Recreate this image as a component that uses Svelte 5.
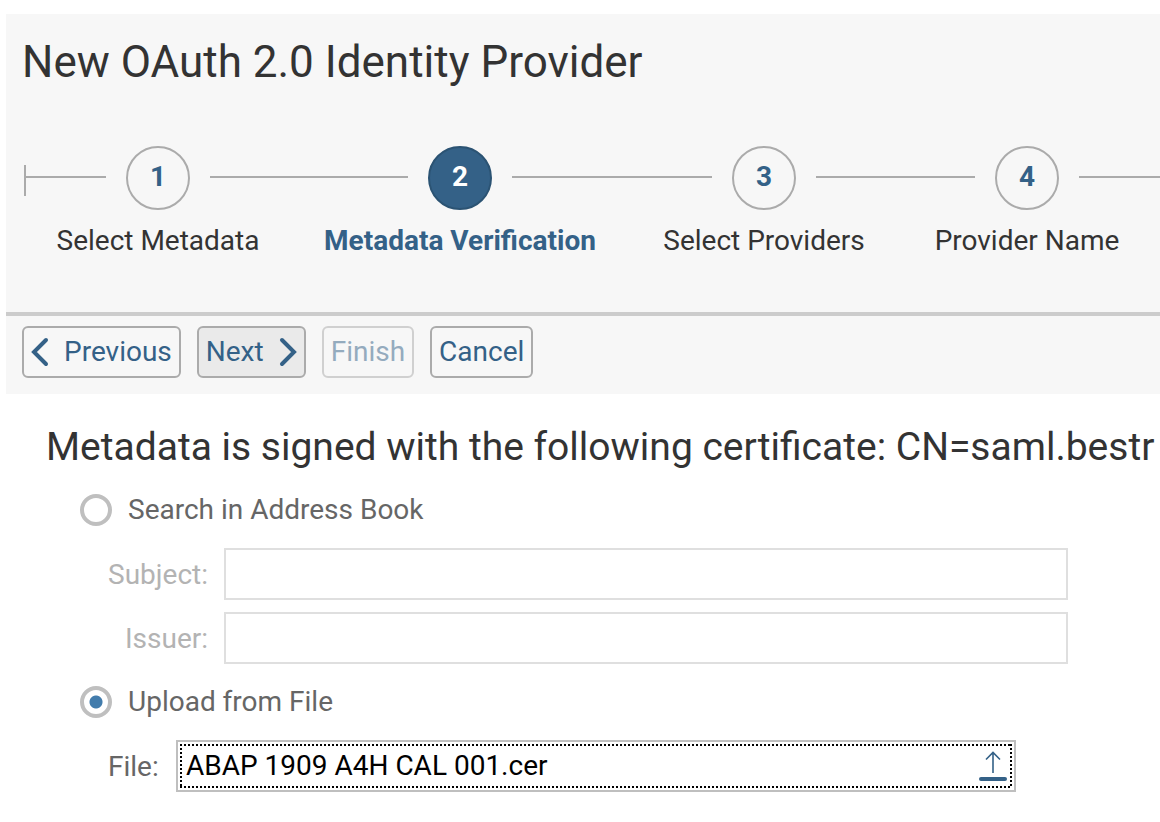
<script>
  const steps = [
    { number: 1, label: 'Select Metadata' },
    { number: 2, label: 'Metadata Verification', current: true },
    { number: 3, label: 'Select Providers' },
    { number: 4, label: 'Provider Name' }
  ];
  let source = $state('file');
  let fileName = $state('ABAP 1909 A4H CAL 001.cer');
</script>

<main>
  <header>
    <h1>New OAuth 2.0 Identity Provider</h1>
    <ol class="steps">
      {#each steps as step}
        <li class:current={step.current} aria-current={step.current ? 'step' : undefined}>
          <span class="line"></span>
          <span class="circle">{step.number}</span>
          <span class="line"></span>
          <span class="name">{step.label}</span>
        </li>
      {/each}
      <li class="more" aria-hidden="true"><span class="line"></span></li>
    </ol>
    <div class="toolbar">
      <button type="button">
        <svg width="18" height="30" viewBox="0 0 18 30" aria-hidden="true"><path d="M15 3 3 15l12 12" /></svg>
        Previous
      </button>
      <button type="button" class="next">
        Next
        <svg width="18" height="30" viewBox="0 0 18 30" aria-hidden="true"><path d="M3 3l12 12L3 27" /></svg>
      </button>
      <button type="button" disabled>Finish</button>
      <button type="button">Cancel</button>
    </div>
  </header>

  <section>
    <h2>Metadata is signed with the following certificate: CN=saml.bestr</h2>
    <form>
      <label class="choice"><input type="radio" name="source" value="search" bind:group={source} />Search in Address Book</label>
      <div class="fields">
        <label for="subject">Subject:</label>
        <input id="subject" type="text" disabled />
        <label for="issuer">Issuer:</label>
        <input id="issuer" type="text" disabled />
      </div>
      <label class="choice"><input type="radio" name="source" value="file" bind:group={source} />Upload from File</label>
      <div class="file">
        <label for="file">File:</label>
        <div class="picker">
          <div class="focus">
            <input id="file" type="text" bind:value={fileName} />
            <button type="button" aria-label="Browse">
              <svg width="28" height="32" viewBox="0 0 28 32" aria-hidden="true">
                <path d="M14 23V3M7 9.500l7-7 7 7" stroke-width="1.600" />
                <path d="M2 29h24" stroke-width="4" stroke-linecap="round" />
              </svg>
            </button>
          </div>
        </div>
      </div>
    </form>
  </section>
</main>

<style>
  :global(body) {
    margin: 0;
    background: #fff;
    overflow-x: hidden;
  }
  main {
    padding: 14px 0 30px 6px;
    font-family: Roboto, 'Open Sans', sans-serif;
    font-size: 28px;
    line-height: 36px;
    color: #333;
    overflow: hidden;
  }
  header {
    background: #f7f7f7;
  }
  h1 {
    margin: 0;
    padding: 20px 16px 0;
    font-size: 44px;
    line-height: 56px;
    font-weight: 400;
    white-space: nowrap;
  }
  .steps {
    display: grid;
    grid-template-columns: 268px 336px 272px 254px minmax(0, 1fr);
    margin: 0;
    padding: 56px 0 53px 18px;
    list-style: none;
  }
  li {
    display: grid;
    grid-template-columns: 1fr 64px 1fr;
    column-gap: 20px;
    row-gap: 13px;
  }
  .more {
    display: block;
  }
  .line {
    display: block;
    box-sizing: border-box;
    height: 32px;
    border-bottom: 2px solid #ababab;
  }
  li:first-child > .line:first-child {
    height: 50px;
    background: linear-gradient(#ababab, #ababab) 0 19px / 2px 31px no-repeat,
      linear-gradient(#ababab, #ababab) 0 30px / 100% 2px no-repeat;
    border: 0;
  }
  .circle {
    box-sizing: border-box;
    width: 64px;
    height: 64px;
    border: 2px solid #ababab;
    border-radius: 50%;
    line-height: 58px;
    text-align: center;
    font-weight: 700;
    color: #346187;
  }
  .name {
    grid-column: 1 / -1;
    text-align: center;
    white-space: nowrap;
  }
  .current .circle {
    background: #346187;
    border-color: #2b5373;
    color: #fff;
  }
  .current .name {
    font-weight: 700;
    color: #346187;
  }
  .toolbar {
    display: flex;
    gap: 16px;
    padding: 10px 16px 16px;
    border-top: 4px solid #ccc;
  }
  button {
    font: inherit;
    color: #346187;
  }
  svg {
    display: block;
    fill: none;
    stroke: #346187;
  }
  .toolbar button {
    display: flex;
    align-items: center;
    gap: 15px;
    box-sizing: border-box;
    height: 52px;
    padding: 0 7px;
    border: 2px solid #ababab;
    border-radius: 6px;
    background: #f7f7f7;
  }
  .toolbar svg {
    stroke-width: 4;
    stroke-linecap: round;
  }
  .toolbar .next {
    background: #eaeaea;
  }
  .toolbar button:disabled {
    opacity: 0.5;
  }
  section {
    padding: 27px 0 0 40px;
  }
  h2 {
    margin: 0;
    font-size: 39px;
    line-height: 52px;
    font-weight: 400;
    white-space: nowrap;
  }
  form {
    padding: 17px 92px 0 34px;
    color: #666;
  }
  .choice {
    display: flex;
    align-items: center;
    gap: 16px;
    height: 40px;
  }
  input {
    box-sizing: border-box;
    min-width: 0;
    margin: 0;
    font: inherit;
  }
  .choice input {
    appearance: none;
    width: 32px;
    height: 32px;
    border: 4px solid #bfbfbf;
    border-radius: 50%;
    background: #fff;
  }
  .choice input:checked {
    background: radial-gradient(circle, #427cac 6px, transparent 7px);
  }
  .fields {
    display: grid;
    grid-template-columns: 128px 1fr;
    align-items: center;
    gap: 12px 16px;
    padding: 18px 0;
    text-align: right;
    color: #b3b3b3;
  }
  .fields label,
  .file label {
    padding-top: 2px;
  }
  .fields input {
    height: 52px;
    border: 2px solid #dfdfdf;
    background: #fff;
  }
  .file {
    display: grid;
    grid-template-columns: 52px 1fr;
    align-items: center;
    gap: 16px;
    padding: 18px 52px 0 28px;
  }
  .picker {
    padding: 2px;
    border: 2px solid #bfbfbf;
  }
  .focus {
    display: flex;
    align-items: center;
    height: 44px;
    box-sizing: border-box;
    padding: 2px 5px 2px 6px;
    background:
      repeating-linear-gradient(90deg, #000 0 2px, transparent 2px 4px) 0 0 / 100% 2px no-repeat,
      repeating-linear-gradient(90deg, #000 0 2px, transparent 2px 4px) 0 100% / 100% 2px no-repeat,
      repeating-linear-gradient(#000 0 2px, transparent 2px 4px) 0 0 / 2px 100% no-repeat,
      repeating-linear-gradient(#000 0 2px, transparent 2px 4px) 100% 0 / 2px 100% no-repeat;
  }
  .focus input {
    flex: 1;
    height: 36px;
    padding: 0;
    border: 0;
    outline: 0;
    background: transparent;
    color: #000;
  }
  .focus button {
    padding: 0;
    border: 0;
    background: transparent;
  }
</style>
